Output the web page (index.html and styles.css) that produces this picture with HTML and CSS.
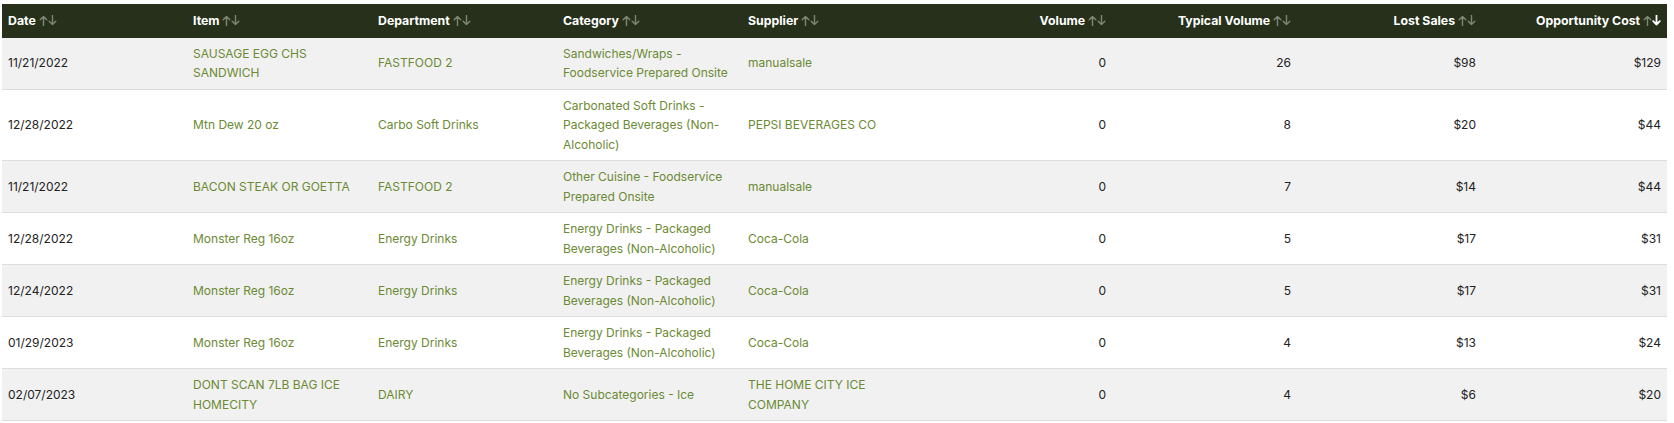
FILE: index.html
```html
<!DOCTYPE html>
<html lang="en">
<head>
<meta charset="utf-8">
<title>Lost Sales</title>
<link rel="stylesheet" href="styles.css">
</head>
<body>
<div class="wrap">
<table class="grid">
  <colgroup>
    <col><col><col><col><col><col><col><col><col>
  </colgroup>
  <thead>
    <tr>
      <th>Date <svg class="sort" viewBox="0 0 18 11" width="18" height="11"><path class="up" d="M4.5 10.5V1.5M1.2 4.8L4.5 1.5L7.8 4.8"/><path class="dn" d="M13.5 0.5V9.5M10.2 6.2L13.5 9.5L16.8 6.2"/></svg></th>
      <th>Item <svg class="sort" viewBox="0 0 18 11" width="18" height="11"><path class="up" d="M4.5 10.5V1.5M1.2 4.8L4.5 1.5L7.8 4.8"/><path class="dn" d="M13.5 0.5V9.5M10.2 6.2L13.5 9.5L16.8 6.2"/></svg></th>
      <th>Department <svg class="sort" viewBox="0 0 18 11" width="18" height="11"><path class="up" d="M4.5 10.5V1.5M1.2 4.8L4.5 1.5L7.8 4.8"/><path class="dn" d="M13.5 0.5V9.5M10.2 6.2L13.5 9.5L16.8 6.2"/></svg></th>
      <th>Category <svg class="sort" viewBox="0 0 18 11" width="18" height="11"><path class="up" d="M4.5 10.5V1.5M1.2 4.8L4.5 1.5L7.8 4.8"/><path class="dn" d="M13.5 0.5V9.5M10.2 6.2L13.5 9.5L16.8 6.2"/></svg></th>
      <th>Supplier <svg class="sort" viewBox="0 0 18 11" width="18" height="11"><path class="up" d="M4.5 10.5V1.5M1.2 4.8L4.5 1.5L7.8 4.8"/><path class="dn" d="M13.5 0.5V9.5M10.2 6.2L13.5 9.5L16.8 6.2"/></svg></th>
      <th class="num">Volume <svg class="sort" viewBox="0 0 18 11" width="18" height="11"><path class="up" d="M4.5 10.5V1.5M1.2 4.8L4.5 1.5L7.8 4.8"/><path class="dn" d="M13.5 0.5V9.5M10.2 6.2L13.5 9.5L16.8 6.2"/></svg></th>
      <th class="num">Typical Volume <svg class="sort" viewBox="0 0 18 11" width="18" height="11"><path class="up" d="M4.5 10.5V1.5M1.2 4.8L4.5 1.5L7.8 4.8"/><path class="dn" d="M13.5 0.5V9.5M10.2 6.2L13.5 9.5L16.8 6.2"/></svg></th>
      <th class="num">Lost Sales <svg class="sort" viewBox="0 0 18 11" width="18" height="11"><path class="up" d="M4.5 10.5V1.5M1.2 4.8L4.5 1.5L7.8 4.8"/><path class="dn" d="M13.5 0.5V9.5M10.2 6.2L13.5 9.5L16.8 6.2"/></svg></th>
      <th class="num">Opportunity Cost <svg class="sort" viewBox="0 0 18 11" width="18" height="11"><path class="up" d="M4.5 10.5V1.5M1.2 4.8L4.5 1.5L7.8 4.8"/><path class="dn on" d="M13.5 0.5V9.5M10.2 6.2L13.5 9.5L16.8 6.2"/></svg></th>
    </tr>
  </thead>
  <tbody>
    <tr>
      <td>11/21/2022</td>
      <td class="link">SAUSAGE EGG CHS SANDWICH</td>
      <td class="link">FASTFOOD 2</td>
      <td class="link">Sandwiches/Wraps - Foodservice Prepared Onsite</td>
      <td class="link">manualsale</td>
      <td class="num">0</td>
      <td class="num">26</td>
      <td class="num">$98</td>
      <td class="num">$129</td>
    </tr>
    <tr>
      <td>12/28/2022</td>
      <td class="link">Mtn Dew 20 oz</td>
      <td class="link">Carbo Soft Drinks</td>
      <td class="link">Carbonated Soft Drinks - Packaged Beverages (Non-Alcoholic)</td>
      <td class="link">PEPSI BEVERAGES CO</td>
      <td class="num">0</td>
      <td class="num">8</td>
      <td class="num">$20</td>
      <td class="num">$44</td>
    </tr>
    <tr>
      <td>11/21/2022</td>
      <td class="link">BACON STEAK OR GOETTA</td>
      <td class="link">FASTFOOD 2</td>
      <td class="link">Other Cuisine - Foodservice Prepared Onsite</td>
      <td class="link">manualsale</td>
      <td class="num">0</td>
      <td class="num">7</td>
      <td class="num">$14</td>
      <td class="num">$44</td>
    </tr>
    <tr>
      <td>12/28/2022</td>
      <td class="link">Monster Reg 16oz</td>
      <td class="link">Energy Drinks</td>
      <td class="link">Energy Drinks - Packaged Beverages (Non-Alcoholic)</td>
      <td class="link">Coca-Cola</td>
      <td class="num">0</td>
      <td class="num">5</td>
      <td class="num">$17</td>
      <td class="num">$31</td>
    </tr>
    <tr>
      <td>12/24/2022</td>
      <td class="link">Monster Reg 16oz</td>
      <td class="link">Energy Drinks</td>
      <td class="link">Energy Drinks - Packaged Beverages (Non-Alcoholic)</td>
      <td class="link">Coca-Cola</td>
      <td class="num">0</td>
      <td class="num">5</td>
      <td class="num">$17</td>
      <td class="num">$31</td>
    </tr>
    <tr>
      <td>01/29/2023</td>
      <td class="link">Monster Reg 16oz</td>
      <td class="link">Energy Drinks</td>
      <td class="link">Energy Drinks - Packaged Beverages (Non-Alcoholic)</td>
      <td class="link">Coca-Cola</td>
      <td class="num">0</td>
      <td class="num">4</td>
      <td class="num">$13</td>
      <td class="num">$24</td>
    </tr>
    <tr>
      <td>02/07/2023</td>
      <td class="link">DONT SCAN 7LB BAG ICE HOMECITY</td>
      <td class="link">DAIRY</td>
      <td class="link">No Subcategories - Ice</td>
      <td class="link">THE HOME CITY ICE COMPANY</td>
      <td class="num">0</td>
      <td class="num">4</td>
      <td class="num">$6</td>
      <td class="num">$20</td>
    </tr>
  </tbody>
</table>
</div>
</body>
</html>
```

FILE: styles.css
```css
html, body {
  margin: 0;
  padding: 0;
  background: #ffffff;
}

.wrap {
  padding: 4px 0 0 2px;
}

.grid {
  width: 1665px;
  table-layout: fixed;
  border-collapse: collapse;
  font-family: Inter, "Liberation Sans", Arial, sans-serif;
  font-size: 12px;
  color: #222222;
}

.grid col {
  width: 185px;
}

.grid th {
  background: #26301b;
  color: #ffffff;
  font-weight: bold;
  font-size: 12.3px;
  text-align: left;
  line-height: 20px;
  padding: 7px 6px 6.5px;
  white-space: nowrap;
}

.grid td {
  line-height: 19.5px;
  padding: 6px 6px;
  vertical-align: middle;
  border-bottom: 1px solid #dddddd;
}

.grid tbody tr:nth-child(odd) td {
  background: #f1f1f1;
}

.grid .num {
  text-align: right;
}

.grid .link {
  color: #6b8a34;
}

.sort {
  vertical-align: -1px;
  fill: none;
  stroke-width: 1.4;
  stroke-linecap: round;
  stroke-linejoin: round;
}

.sort .up,
.sort .dn {
  stroke: #7d8873;
}

.sort .dn.on {
  stroke: #ffffff;
  stroke-width: 1.8;
}
```
